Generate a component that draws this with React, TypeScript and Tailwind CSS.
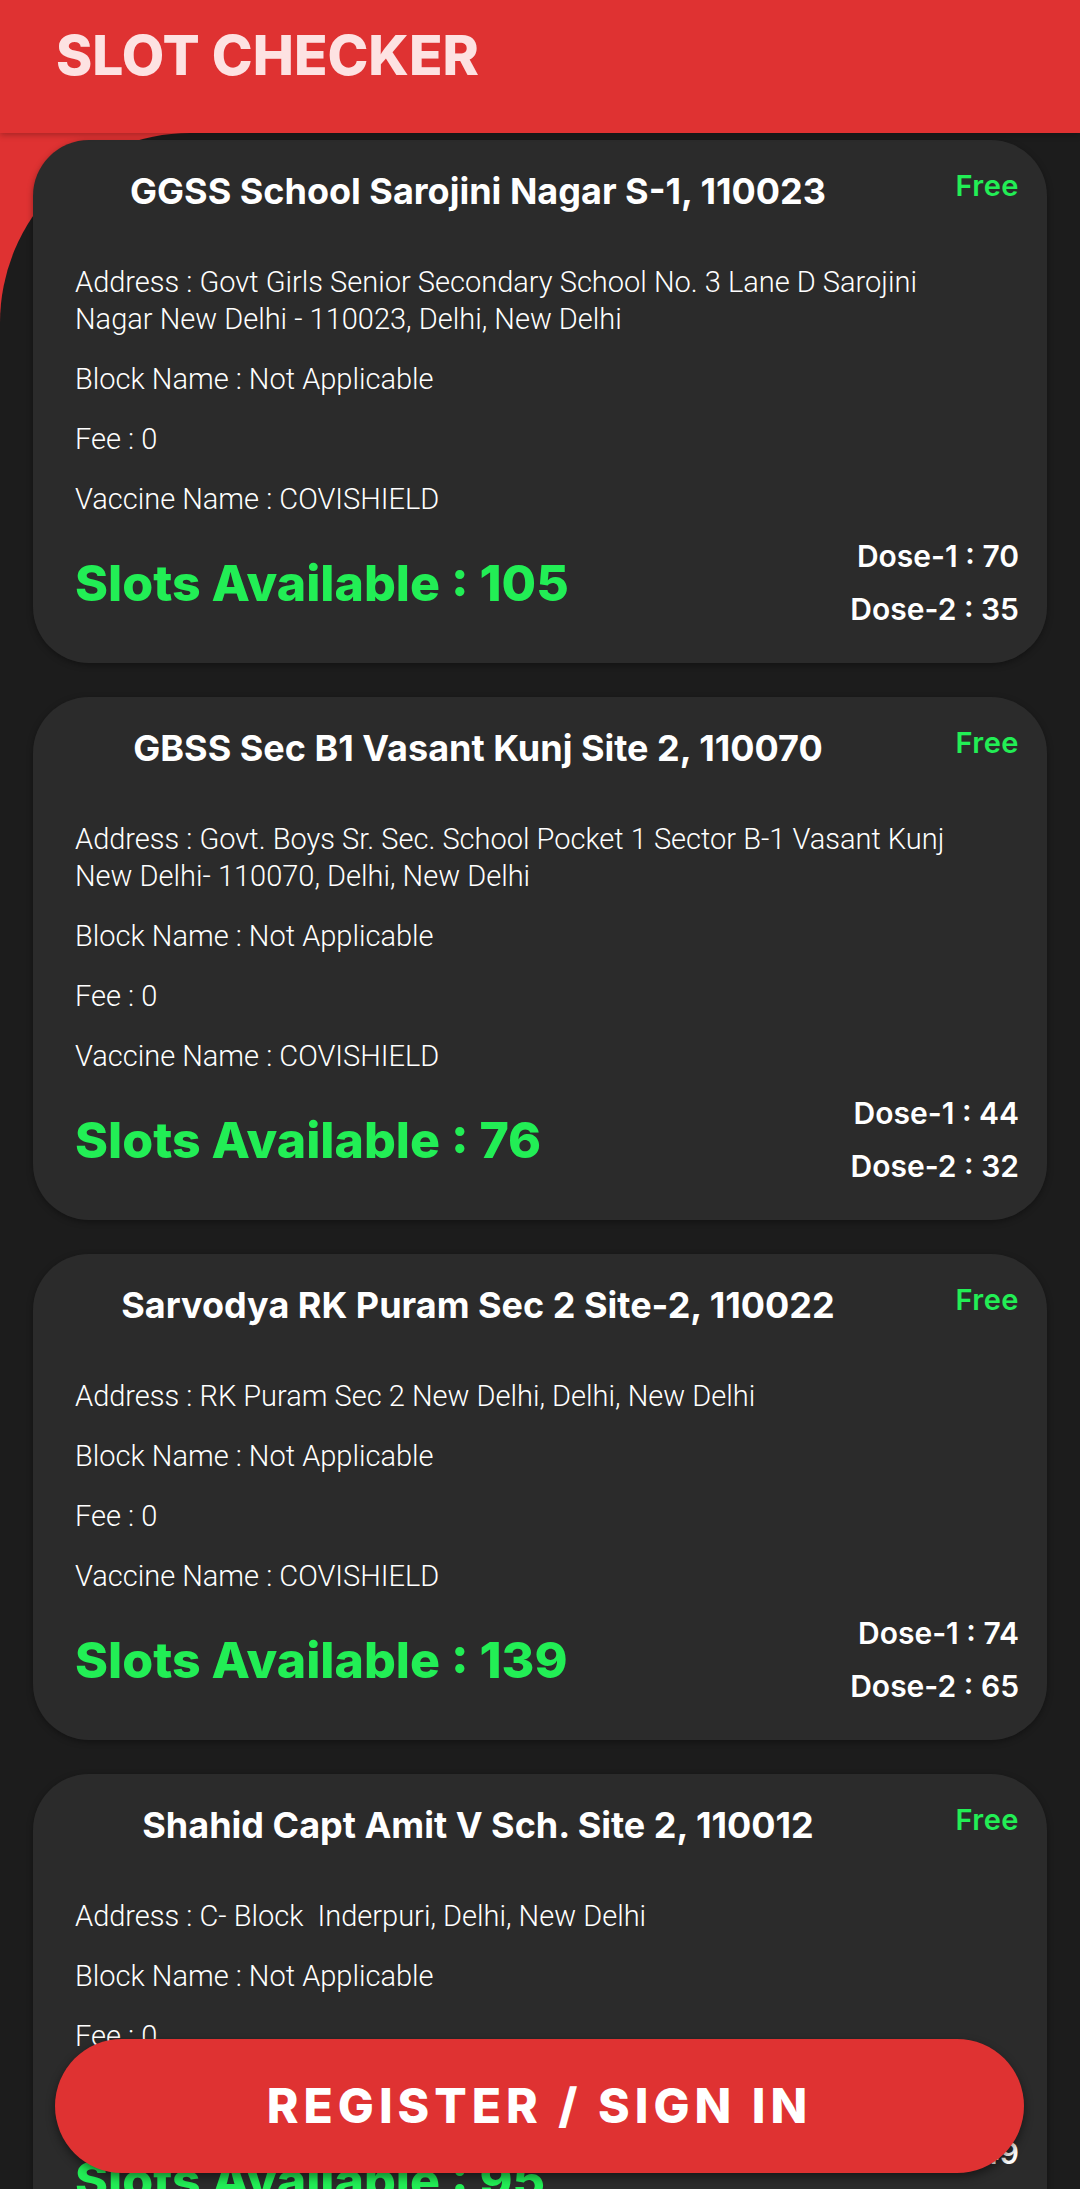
const centres = [
  {
    name: "GGSS School Sarojini Nagar S-1, 110023",
    address:
      "Govt Girls Senior Secondary School No. 3 Lane D Sarojini Nagar New Delhi - 110023, Delhi, New Delhi",
    slots: 105,
    dose1: 70,
    dose2: 35,
  },
  {
    name: "GBSS Sec B1 Vasant Kunj Site 2, 110070",
    address:
      "Govt. Boys Sr. Sec. School Pocket 1 Sector B-1 Vasant Kunj New Delhi- 110070, Delhi, New Delhi",
    slots: 76,
    dose1: 44,
    dose2: 32,
  },
  {
    name: "Sarvodya RK Puram Sec 2 Site-2, 110022",
    address: "RK Puram Sec 2 New Delhi, Delhi, New Delhi",
    slots: 139,
    dose1: 74,
    dose2: 65,
  },
  {
    name: "Shahid Capt Amit V Sch. Site 2, 110012",
    address: "C- Block  Inderpuri, Delhi, New Delhi",
    slots: 95,
    dose1: 49,
    dose2: 46,
  },
];

type Centre = (typeof centres)[number];

function CentreCard({ c }: { c: Centre }) {
  return (
    <div className="rounded-[56px] bg-[#2b2b2b] pt-[29px] pb-[27px] pl-[42px] pr-[28px] shadow-[0_2px_6px_rgba(0,0,0,0.35)]">
      <div className="flex items-start">
        <div className="w-[806px] text-center font-['Inter',sans-serif] text-[36px] leading-[44px] font-bold text-white">
          {c.name}
        </div>
        <div className="ml-auto font-['Inter',sans-serif] text-[29px] leading-[34px] font-semibold tracking-[0.5px] text-[#22ee55]">
          Free
        </div>
      </div>

      <div className="mt-[51px] pr-[34px] font-['Roboto',sans-serif] font-light text-[29px] leading-[37px] text-white whitespace-pre-wrap">
        <p>Address : {c.address}</p>
        <p className="mt-[23px]">Block Name : Not Applicable</p>
        <p className="mt-[23px]">Fee : 0</p>
        <p className="mt-[23px]">Vaccine Name : COVISHIELD</p>
      </div>

      <div className="mt-[12px] flex items-center justify-between">
        <div className="font-['Inter',sans-serif] text-[50px] font-extrabold text-[#22ee55]">
          Slots Available : {c.slots}
        </div>
        <div className="text-right font-['Inter',sans-serif] text-[30px] leading-[53px] font-semibold text-white">
          <div>Dose-1 : {c.dose1}</div>
          <div>Dose-2 : {c.dose2}</div>
        </div>
      </div>
    </div>
  );
}

export default function App() {
  return (
    <div className="relative h-[2189px] w-[1080px] overflow-hidden bg-[#df3232]">
      <header className="relative z-10 h-[133px] bg-[#df3232] pl-[56px] pt-[22px] shadow-[0_2px_6px_rgba(0,0,0,0.25)]">
        <h1 className="font-['Inter',sans-serif] text-[55px] leading-[66px] font-extrabold text-[#fde2e2]">
          SLOT CHECKER
        </h1>
      </header>

      <main className="min-h-[2056px] rounded-tl-[190px] bg-[#1c1c1c] px-[33px] pt-[7px]">
        <div className="flex flex-col gap-[34px]">
          {centres.map((c) => (
            <CentreCard key={c.name} c={c} />
          ))}
        </div>
      </main>

      <button className="absolute left-[55px] top-[2039px] flex h-[134px] w-[969px] items-center justify-center rounded-full bg-[#df3232] font-['Inter',sans-serif] text-[48px] font-extrabold tracking-[5px] text-white shadow-[0_4px_10px_rgba(0,0,0,0.45)]">
        REGISTER / SIGN IN
      </button>
    </div>
  );
}
